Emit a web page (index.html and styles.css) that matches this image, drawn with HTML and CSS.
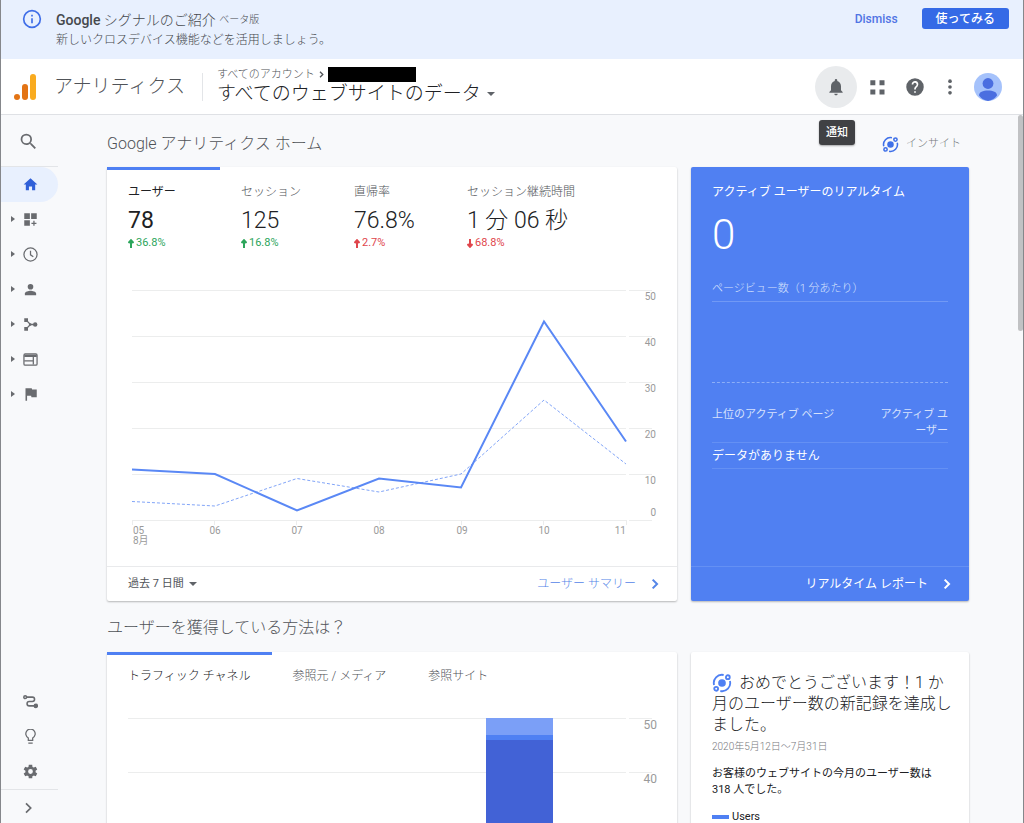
FILE: index.html
```html
<!DOCTYPE html>
<html lang="ja">
<head>
<meta charset="utf-8">
<title>アナリティクス</title>
<link rel="stylesheet" href="styles.css">
</head>
<body>
<svg class="defs" aria-hidden="true">
  <symbol id="insight" viewBox="0 0 24 24">
    <circle cx="12" cy="12" r="4.600" fill="currentColor"/>
    <g fill="none" stroke="currentColor" stroke-width="2.200">
      <path d="M2.500 14.500A9.800 9.800 0 0 1 14 2.400M21.500 9.500A9.800 9.800 0 0 1 10 21.600"/>
      <circle cx="19" cy="5" r="2.300"/>
      <circle cx="5" cy="19" r="2.300"/>
    </g>
  </symbol>
  <symbol id="chevron" viewBox="0 0 24 24"><path d="M8 4.500L15.500 12L8 19.500" fill="none" stroke="currentColor" stroke-width="3.500"/></symbol>
</svg>
<div class="app">
  <section class="banner">
    <svg class="banner-icon" viewBox="0 0 24 24" fill="none" stroke="currentColor" stroke-width="2"><circle cx="12" cy="12" r="10"/><path d="M12 11v6M12 7v2"/></svg>
    <div class="banner-text">
      <p class="banner-title"><b>Google</b> シグナルのご紹介 <small>ベータ版</small></p>
      <p class="banner-sub">新しいクロスデバイス機能などを活用しましょう。</p>
    </div>
    <button class="dismiss" type="button">Dismiss</button>
    <button class="try" type="button">使ってみる</button>
  </section>

  <header class="header">
    <svg class="logo" viewBox="0 0 24 28"><rect x="17" y="1" width="6" height="26" rx="3" fill="#f9ab1f"/><rect x="9" y="11" width="6" height="16" rx="3" fill="#e37415"/><circle cx="4" cy="24" r="3" fill="#e37415"/></svg>
    <span class="product">アナリティクス</span>
    <div class="account">
      <div class="crumb"><span>すべてのアカウント</span><svg viewBox="0 0 24 24"><use href="#chevron"/></svg><span class="redacted"></span></div>
      <button class="view" type="button">すべてのウェブサイトのデータ<i class="caret"></i></button>
    </div>
    <div class="actions">
      <button class="bell" type="button" aria-label="通知"><svg viewBox="0 0 24 24" fill="currentColor"><path d="M12 22c1.100 0 2-.9 2-2h-4c0 1.100.9 2 2 2zm6-6v-5c0-3.070-1.640-5.640-4.500-6.320V4a1.500 1.500 0 0 0-3 0v.68C7.630 5.360 6 7.920 6 11v5l-2 2v1h16v-1l-2-2z"/></svg><span class="tooltip">通知</span></button>
      <button class="apps" type="button" aria-label="アプリ"><svg viewBox="0 0 24 24" fill="currentColor"><path d="M4 4h6v6H4zM15 4h6v6h-6zM4 15h6v6H4zM15 15h6v6h-6z"/></svg></button>
      <button class="help" type="button" aria-label="ヘルプ"><svg viewBox="0 0 24 24" fill="currentColor"><path d="M12 1.500a10.500 10.500 0 1 0 0 21 10.500 10.500 0 0 0 0-21zm1 17.500h-2v-2h2v2zm2.070-7.750-.9.920C13.450 12.900 13 13.500 13 15h-2v-.5c0-1.100.45-2.100 1.170-2.830l1.240-1.260A2 2 0 1 0 10 9H8a4 4 0 1 1 7.070 2.250z"/></svg></button>
      <button class="more" type="button" aria-label="その他"><svg viewBox="0 0 24 24" fill="currentColor"><circle cx="12" cy="5" r="2.200"/><circle cx="12" cy="12" r="2.200"/><circle cx="12" cy="19" r="2.200"/></svg></button>
      <button class="avatar" type="button" aria-label="プロフィール"><svg viewBox="0 0 28 28"><circle cx="14" cy="14" r="14" fill="#a5c2fb"/><circle cx="14" cy="10.500" r="5.400" fill="#4a6ee0"/><path d="M5 22.500C5 19 9 17.600 14 17.600S23 19 23 22.500A13.900 13.900 0 0 1 14 28A13.900 13.900 0 0 1 5 22.500z" fill="#4a6ee0"/></svg></button>
    </div>
  </header>

  <div class="body">
    <nav class="side">
      <button class="search" type="button" aria-label="検索"><svg viewBox="0 0 24 24" fill="currentColor"><path d="M15.500 14h-.79l-.28-.27A6.470 6.470 0 0 0 16 9.500 6.500 6.500 0 1 0 9.500 16c1.610 0 3.090-.59 4.230-1.570l.27.28v.79l5 5L20.500 19l-5-5zm-6 0a4.500 4.500 0 1 1 0-9 4.500 4.500 0 0 1 0 9z"/></svg></button>
      <a class="item current" href="#home" aria-label="ホーム"><svg viewBox="0 0 24 24" fill="currentColor"><path d="M9.500 21v-6h5v6h5v-9H23L12 2 1 12h3.500v9z"/></svg></a>
      <a class="item" href="#custom" aria-label="カスタム"><i></i><svg viewBox="0 0 24 24" fill="currentColor"><path d="M2 2h9v9H2zM13 2h9v9h-9zM2 13h9v9H2zM16.500 14h2v3h3v2h-3v3h-2v-3h-3v-2h3z"/></svg></a>
      <a class="item" href="#realtime" aria-label="リアルタイム"><i></i><svg viewBox="0 0 24 24" fill="none" stroke="currentColor" stroke-width="2"><circle cx="12" cy="12" r="10.500"/><path d="M12 6v6.500l4.500 3"/></svg></a>
      <a class="item" href="#audience" aria-label="ユーザー"><i></i><svg viewBox="0 0 24 24" fill="currentColor"><circle cx="12" cy="7.500" r="4.500"/><path d="M3 21v-2.500c0-3 6-4.500 9-4.500s9 1.500 9 4.500V21z"/></svg></a>
      <a class="item" href="#acquisition" aria-label="集客"><i></i><svg viewBox="0 0 24 24" fill="currentColor"><path d="M5 5L12 12L5 19M12 12h7" fill="none" stroke="currentColor" stroke-width="2.200"/><path d="M2 2h6v6H2zM2 16h6v6H2z"/><circle cx="19.500" cy="12" r="3.500"/><circle cx="11.500" cy="12" r="2"/></svg></a>
      <a class="item" href="#behavior" aria-label="行動"><i></i><svg viewBox="0 0 24 24" fill="none" stroke="currentColor" stroke-width="2"><rect x="1.500" y="3" width="21" height="18" rx="2"/><path d="M2 5h20M2 7h20M2 14h14M16.500 8v12"/></svg></a>
      <a class="item" href="#goals" aria-label="コンバージョン"><i></i><svg viewBox="0 0 24 24" fill="currentColor"><path d="M14.500 4L14 2H4v20h2.500v-8h6.500l.5 2.500H22V4z"/></svg></a>
      <span class="spacer"></span>
      <a class="item" href="#attribution" aria-label="アトリビューション"><svg viewBox="0 0 24 24" fill="none" stroke="currentColor" stroke-width="2.500"><circle cx="3.500" cy="5" r="2.200"/><path d="M6 5h9a3.300 3.300 0 0 1 0 7H10a3.300 3.300 0 0 0 0 7h8"/><circle cx="20.500" cy="19" r="2.400" fill="currentColor"/></svg></a>
      <a class="item" href="#discover" aria-label="発見"><svg viewBox="0 0 24 24" fill="none" stroke="currentColor" stroke-width="2"><path d="M8.500 18v-3.700A7.500 7.500 0 1 1 15.500 14.300V18zM8.500 22.500h7"/></svg></a>
      <a class="item" href="#admin" aria-label="管理"><svg viewBox="1 1 22 22" fill="currentColor" fill-rule="evenodd"><path d="M19.400 13a7.500 7.500 0 0 0 0-2l2.500-1.900-2.200-4-3 1.200a7.500 7.500 0 0 0-1.800-1L14.500 2h-5L9 5.300a7.500 7.500 0 0 0-1.800 1l-3-1.200-2.200 4L4.600 11a7.500 7.500 0 0 0 0 2L2 14.900l2.200 4 3-1.200a7.500 7.500 0 0 0 1.800 1l.5 3.300h5l.4-3.300a7.500 7.500 0 0 0 1.800-1l3 1.200 2.200-4zM12 15.500a3.500 3.500 0 1 1 0-7 3.500 3.500 0 0 1 0 7z"/></svg></a>
      <button class="expand" type="button" aria-label="展開"><svg viewBox="0 0 24 24" fill="none" stroke="currentColor" stroke-width="2.600"><path d="M9 5l7 7-7 7"/></svg></button>
    </nav>

    <main class="content">
      <div class="title-row">
        <h1>Google アナリティクス ホーム</h1>
        <button class="insight-link" type="button"><svg viewBox="0 0 24 24"><use href="#insight"/></svg>インサイト</button>
      </div>
      <div class="row">
        <section class="card overview">
          <div class="metrics">
            <button class="metric active" type="button"><span class="m-name">ユーザー</span><span class="m-value">78</span><span class="m-delta up"><svg viewBox="0 0 6 9"><path d="M3 9V2M.5 4L3 1.200L5.500 4"/></svg>36.8%</span></button>
            <button class="metric" type="button"><span class="m-name">セッション</span><span class="m-value">125</span><span class="m-delta up"><svg viewBox="0 0 6 9"><path d="M3 9V2M.5 4L3 1.200L5.500 4"/></svg>16.8%</span></button>
            <button class="metric" type="button"><span class="m-name">直帰率</span><span class="m-value">76.8%</span><span class="m-delta bad"><svg viewBox="0 0 6 9"><path d="M3 9V2M.5 4L3 1.200L5.500 4"/></svg>2.7%</span></button>
            <button class="metric wide" type="button"><span class="m-name">セッション継続時間</span><span class="m-value">1 分 06 秒</span><span class="m-delta bad"><svg viewBox="0 0 6 9"><path d="M3 0V7M.5 5L3 7.800L5.500 5"/></svg>68.8%</span></button>
          </div>
          <svg class="chart" viewBox="0 0 570 296" role="img" aria-label="ユーザー数の推移">
            <path class="grid" d="M25 20.500H519M25 66.500H519M25 112.500H519M25 158.500H519M25 204.500H519M25 250.500H519M522 20.500H545M522 66.500H545M522 112.500H545M522 158.500H545M522 204.500H545M522 250.500H545M25.500 250v5M107.500 250v5M189.500 250v5M272.500 250v5M354.500 250v5M436.500 250v5M519.500 250v5"/>
            <polyline class="previous" points="25,231.500 108,236 190,208.500 272,222 354,204 437,130 519,194"/>
            <polyline class="series" points="25,199.500 108,204 190,240.500 272,208.500 354,217.500 437,51.500 519,171.500"/>
            <g class="axis end"><text x="549" y="30">50</text><text x="549" y="76">40</text><text x="549" y="122">30</text><text x="549" y="168">20</text><text x="549" y="214">10</text><text x="549" y="246">0</text><text x="519" y="264">11</text></g>
            <g class="axis"><text x="26" y="264">05</text><text x="26" y="274">8月</text></g>
            <g class="axis mid"><text x="108" y="264">06</text><text x="190" y="264">07</text><text x="272" y="264">08</text><text x="355" y="264">09</text><text x="437" y="264">10</text></g>
          </svg>
          <footer class="card-foot">
            <button class="range" type="button">過去 7 日間<i class="caret"></i></button>
            <a class="more-link" href="#summary">ユーザー サマリー<svg viewBox="0 0 24 24"><use href="#chevron"/></svg></a>
          </footer>
        </section>

        <section class="card live">
          <div class="live-body">
            <h2>アクティブ ユーザーのリアルタイム</h2>
            <p class="live-count">0</p>
            <p class="live-label">ページビュー数（1 分あたり）</p>
            <div class="live-bars"></div>
            <table class="live-table">
              <thead><tr><th>上位のアクティブ ページ</th><th class="right">アクティブ ユーザー</th></tr></thead>
              <tbody><tr><td colspan="2">データがありません</td></tr></tbody>
            </table>
          </div>
          <footer class="card-foot"><a class="more-link" href="#live">リアルタイム レポート<svg viewBox="0 0 24 24"><use href="#chevron"/></svg></a></footer>
        </section>
      </div>

      <h2 class="section-title">ユーザーを獲得している方法は？</h2>
      <div class="row">
        <section class="card">
          <div class="tabs">
            <button class="tab active" type="button">トラフィック チャネル</button>
            <button class="tab" type="button">参照元 / メディア</button>
            <button class="tab" type="button">参照サイト</button>
          </div>
          <svg class="chart" viewBox="0 0 570 300" role="img" aria-label="チャネル別のユーザー数">
            <path class="grid" d="M21 16.500H519M522 16.500H545M21 70.500H519M522 70.500H545M21 124.500H519M522 124.500H545"/>
            <path d="M379 16h67v17h-67z" fill="#7b9ff7"/><path d="M379 33h67v5h-67z" fill="#4f80f3"/><path d="M379 38h67v248h-67z" fill="#4262d6"/>
            <g class="axis end large"><text x="550" y="27">50</text><text x="550" y="81">40</text></g>
          </svg>
        </section>
        <section class="card news">
          <h3><svg viewBox="0 0 24 24"><use href="#insight"/></svg>おめでとうございます！1 か月のユーザー数の新記録を達成しました。</h3>
          <p class="date">2020年5月12日～7月31日</p>
          <p class="detail">お客様のウェブサイトの今月のユーザー数は 318 人でした。</p>
          <p class="legend"><i></i>Users</p>
        </section>
      </div>
    </main>
    <div class="scroll"></div>
  </div>
</div>
</body>
</html>
```
FILE: styles.css
```css
* { box-sizing: border-box; }
body {
  margin: 0;
  overflow: hidden;
  font-family: Roboto, "Noto Sans CJK JP", sans-serif;
  font-size: 12px;
  line-height: 16px;
  font-weight: 300;
  color: #505358;
  background: #f8f9fb;
}
h1, h2, h3, p { margin: 0; font-weight: 300; }
button { padding: 0; border: 0; background: none; font: inherit; color: inherit; text-align: left; cursor: pointer; }
a { color: inherit; text-decoration: none; }
svg { display: block; flex: none; }
.defs { position: absolute; width: 0; height: 0; }
.app { display: flex; flex-direction: column; height: 100vh; border: solid #85878b; border-width: 0 1px; }
.caret { display: inline-block; border: 4px solid transparent; border-top: 4px solid #5f6368; border-bottom: 0; }

/* Announcement */
.banner { display: flex; align-items: flex-start; flex: none; height: 59px; padding: 8px 14px 0 21px; background: #e8f0fe; }
.banner-icon { width: 20px; height: 20px; margin: 1px 14px 0 0; color: #3f6ee8; }
.banner-text { flex: 1; padding-top: 1px; color: #45484d; font-weight: 400; }
.banner-title { font-size: 14px; line-height: 22px; }
.banner-title b { font-weight: 500; }
.banner-title small { font-size: 10px; vertical-align: 2px; }
.banner-sub { font-size: 12px; line-height: 18px; }
.dismiss { margin: 3px 24px 0 0; color: #5074e4; font-size: 12px; font-weight: 500; }
.try { height: 21px; padding: 0 14px; border-radius: 3px; background: #356ae6; color: #fff; font-size: 12px; font-weight: 500; line-height: 20px; }

/* Header */
.header { display: flex; align-items: center; flex: none; height: 56px; padding: 0 21px 0 12px; background: #fff; border-bottom: 1px solid #dfe1e5; }
.logo { width: 24px; height: 28px; }
.product { margin-left: 17px; padding-right: 17px; font-size: 19px; line-height: 28px; border-right: 1px solid #e3e5e8; }
.account { margin-left: 14px; padding-bottom: 2px; }
.crumb { display: flex; align-items: center; height: 16px; font-size: 11px; }
.crumb svg { width: 9px; height: 9px; margin: 0 2px; }
.redacted { width: 88px; height: 15px; background: #000; }
.view { display: flex; align-items: center; gap: 6px; font-size: 19px; line-height: 22px; color: #202124; }
.actions { display: flex; align-items: center; margin-left: auto; color: #5f6368; }
.bell { position: relative; display: grid; place-items: center; width: 42px; height: 42px; border-radius: 50%; background: #e9ebed; }
.actions svg { width: 20px; height: 20px; }
.apps { margin-left: 10px; }
.help { margin-left: 18px; }
.more { margin-left: 15px; }
.actions .avatar svg { width: 28px; height: 28px; }
.avatar { margin-left: 14px; }
.tooltip { position: absolute; top: 54px; left: 4px; z-index: 2; padding: 0 7px; border-radius: 3px; background: #404144; color: #fff; font-size: 11px; line-height: 25px; font-weight: 500; white-space: nowrap; box-shadow: 0 1px 2px #0005; }

/* Body */
.body { display: flex; flex: 1; min-height: 0; }
.side { display: flex; flex-direction: column; flex: none; width: 57px; color: #696b6f; }
.search { display: grid; place-items: center start; height: 52px; padding: 2px 0 0 17px; border-bottom: 1px solid #e3e5e8; }
.search svg { width: 21px; height: 21px; }
.item { display: flex; align-items: center; height: 35px; padding: 0 0 1px 10px; }
.item svg { width: 15px; height: 15px; margin-left: auto; margin-right: 20px; }
.item i { border: 3px solid transparent; border-left: 4px solid #696b6f; border-right: 0; }
.current { border-radius: 0 18px 18px 0; background: #e8f0fe; color: #3060d8; }
.spacer { flex: 1; }
.expand { display: grid; place-items: center start; height: 34px; padding: 3px 0 0 19px; border-top: 1px solid #e3e5e8; }
.expand svg { width: 16px; height: 16px; }
.content { flex: 1; min-width: 0; padding: 0 49px; overflow: hidden; }
.scroll { flex: none; width: 5px; height: 216px; border-radius: 3px; background: #c1c2c4; }
.title-row { display: flex; align-items: center; justify-content: space-between; height: 52px; padding: 6px 8px 0 0; }
h1 { font-size: 16px; line-height: 24px; }
.section-title { height: 51px; font-size: 16px; line-height: 54px; }
.insight-link { display: flex; align-items: center; gap: 7px; font-size: 11px; color: #77797d; }
.insight-link svg { width: 17px; height: 17px; color: #3f70e8; }
.row { display: grid; grid-template-columns: 570fr 278fr; gap: 14px; }
.card { display: flex; flex-direction: column; min-width: 0; border-radius: 2px; background: #fff; box-shadow: 0 1px 2px #0004; }
.metrics, .tabs { display: flex; }
.metric { flex: 0 0 113px; padding: 13px 0 0 21px; border-top: 3px solid transparent; white-space: nowrap; }
.metric.wide { flex: 1; }
.metric.active, .tab.active { border-top-color: #4f80f3; color: #202124; }
.metric.active { font-weight: 400; }
.m-name, .m-value, .m-delta { display: block; }
.m-name { line-height: 18px; }
.m-value { font-size: 23px; line-height: 40px; color: #202124; }
.m-delta { display: flex; align-items: center; gap: 2px; font-size: 11px; line-height: 16px; font-weight: 400; margin-top: -6px; }
.m-delta svg { width: 6px; height: 9px; fill: none; stroke: currentColor; stroke-width: 2; }
.m-delta.up { color: #2ca55b; }
.m-delta.bad { color: #e0454b; }
.chart { width: 100%; height: auto; }
.overview .chart { margin-top: auto; }
.grid { fill: none; stroke: #eceded; stroke-width: 1; }
.series, .previous { fill: none; stroke: #5a88f5; stroke-width: 2; }
.previous { stroke: #82a5f8; stroke-width: 1; stroke-dasharray: 3 2; }
.axis { font-size: 10px; font-weight: 400; fill: #9a9a9a; }
.axis.end { text-anchor: end; }
.axis.mid { text-anchor: middle; }
.axis.large { font-size: 12px; }
.card-foot { display: flex; align-items: center; height: 35px; padding: 0 15px 0 21px; border-top: 1px solid #e9eaec; }
.overview { min-height: 434px; }
.range { display: flex; align-items: center; gap: 5px; font-size: 11px; font-weight: 400; }
.more-link { display: flex; align-items: center; gap: 12px; margin-left: auto; color: #5586e8; }
.more-link svg { width: 14px; height: 14px; }

/* Realtime */
.live { background: #5080f2; color: #fff; font-weight: 400; }
.live-body { flex: 1; padding: 15px 21px 0; }
.live h2 { font-size: 12px; line-height: 20px; font-weight: 400; }
.live-count { font-size: 42px; line-height: 66px; font-weight: 300; }
.live-label { margin-top: 12px; padding-bottom: 3px; font-size: 11px; line-height: 18px; border-bottom: 1px solid #7199f5; color: #d6e1fc; }
.live-bars { height: 81px; border-bottom: 1px dashed #8caef7; }
.live-table { width: 100%; margin-top: 20px; border-collapse: collapse; }
.live-table th, .live-table td { padding: 4px 0 3px; text-align: left; vertical-align: top; border-bottom: 1px solid #6490f4; }
.live-table th { font-size: 11px; font-weight: 400; line-height: 16px; color: #d6e1fc; }
.live-table .right { width: 72px; text-align: right; line-break: anywhere; }
.live-table td { line-height: 18px; }
.live .card-foot { border-color: #6490f4; }
.live .more-link { color: #fff; }

/* Acquisition */
.tab { padding: 11px 21px 16px; border-top: 3px solid transparent; line-height: 20px; }
.news { padding: 20px 16px 0 21px; color: #202124; }
.news h3 { font-size: 16px; line-height: 21px; }
.news h3 svg { display: inline-block; width: 20px; height: 20px; margin-right: 7px; vertical-align: -5px; color: #4f80f3; }
.date { margin-top: 3px; font-size: 10px; line-height: 18px; color: #77797d; }
.detail { margin-top: 10px; font-size: 11px; line-height: 16px; font-weight: 400; }
.legend { display: flex; align-items: center; gap: 3px; margin-top: 12px; font-size: 11px; line-height: 14px; font-weight: 400; }
.legend i { width: 17px; height: 4px; background: #4f80f3; }
```
